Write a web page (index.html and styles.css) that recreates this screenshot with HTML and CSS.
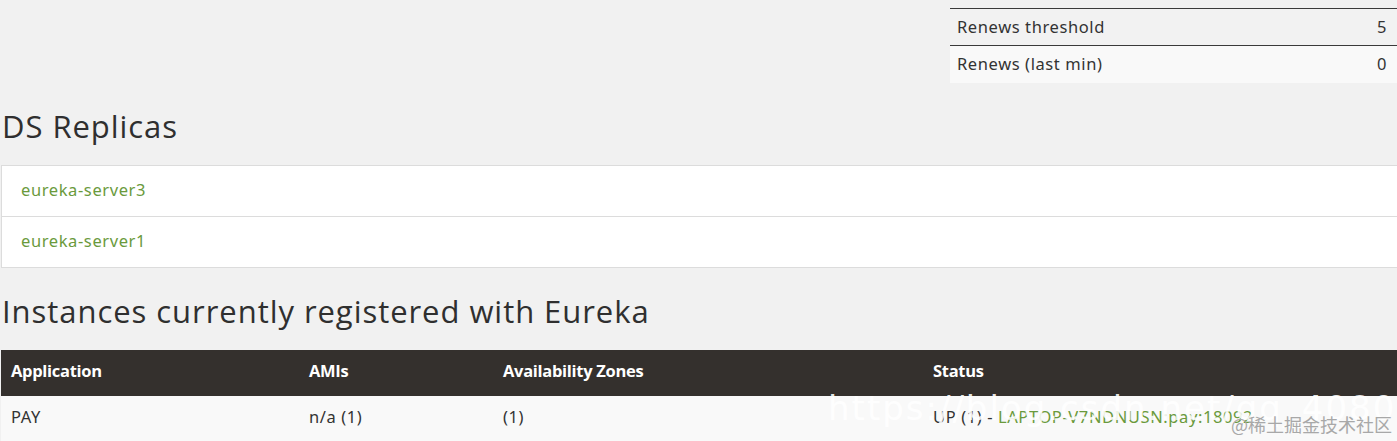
FILE: index.html
```html
<!DOCTYPE html>
<html>
<head>
<meta charset="utf-8">
<link rel="stylesheet" href="styles.css">
</head>
<body>
<div class="page">
  <div class="top-row">
    <table class="stats">
      <tr class="odd"><td>Renews threshold</td><td class="num">5</td></tr>
      <tr class="even"><td>Renews (last min)</td><td class="num">0</td></tr>
    </table>
  </div>
  <h1 class="title">DS Replicas</h1>
  <ul class="replicas">
    <li><a href="#">eureka-server3</a></li>
    <li><a href="#">eureka-server1</a></li>
  </ul>
  <h1 class="title">Instances currently registered with Eureka</h1>
  <table class="instances">
    <thead>
      <tr><th class="c1">Application</th><th class="c2">AMIs</th><th class="c3">Availability Zones</th><th>Status</th></tr>
    </thead>
    <tbody>
      <tr><td>PAY</td><td>n/a (1)</td><td>(1)</td><td>UP (1) - <a href="#">LAPTOP-V7NDNUSN:pay:18092</a></td></tr>
    </tbody>
  </table>
  <div class="wm-url">https://blog.csdn.net/qq_408083</div>
  <div class="wm-cn">@稀土掘金技术社区</div>
</div>
</body>
</html>
```

FILE: styles.css
```css
html, body {
  margin: 0;
  padding: 0;
  background: #f1f1f1;
  overflow: hidden;
}
.page {
  position: relative;
  width: 1397px;
  height: 441px;
  overflow: hidden;
  font-family: "Noto Sans", "Open Sans", sans-serif;
  font-size: 16.5px;
  letter-spacing: 0.6px;
  color: #333;
}
.top-row {
  display: flex;
  justify-content: flex-end;
  padding-top: 8px;
}
.stats {
  width: 447px;
  border-collapse: collapse;
  color: #333;
}
.stats td {
  height: 37px;
  box-sizing: border-box;
  padding: 0 10px 2px 7px;
  border-top: 1px solid #3a3a3a;
}
.stats .odd td { background: #f2f2f2; }
.stats .even td { background: #f9f9f9; }
.stats td.num { text-align: right; }
.title {
  margin: 0;
  padding: 26px 0 0 2px;
  height: 82px;
  box-sizing: border-box;
  font-family: "Open Sans", "Noto Sans", sans-serif;
  font-weight: 500;
  font-size: 31px;
  line-height: 34px;
  color: #2f2f2f;
  letter-spacing: 0.95px;
}
.replicas {
  list-style: none;
  margin: 0 0 0 1px;
  padding: 0;
  background: #fff;
  border: 1px solid #dcdcdc;
  border-right: none;
}
.replicas li {
  height: 50px;
  display: flex;
  align-items: center;
  padding: 0 0 3px 19px;
  box-sizing: border-box;
}
.replicas li + li { border-top: 1px solid #dcdcdc; height: 51px; }
a {
  color: #6a9a3c;
  text-decoration: none;
}
.instances {
  margin-left: 1px;
  width: 1396px;
  border-collapse: collapse;
  table-layout: fixed;
}
.instances th {
  background: #34302d;
  color: #fff;
  font-family: "Open Sans", sans-serif;
  font-weight: 700;
  font-size: 16.5px;
  letter-spacing: -0.3px;
  text-align: left;
  height: 46px;
  padding: 0 10px 5px;
  box-sizing: border-box;
}
.instances th.c1 { width: 298px; }
.instances th.c2 { width: 194px; }
.instances th.c3 { width: 430px; }
.instances td {
  background: #f9f9f9;
  height: 46px;
  box-sizing: border-box;
  padding: 0 10px 5px;
  color: #333;
}
.wm-url {
  position: absolute;
  left: 828px;
  top: 388px;
  font-family: "DejaVu Sans", sans-serif;
  font-size: 34px;
  letter-spacing: 2px;
  color: rgba(255, 255, 255, 0.9);
  white-space: nowrap;
}
.wm-cn {
  position: absolute;
  left: 1231px;
  top: 411px;
  font-family: "Noto Sans CJK SC", sans-serif;
  font-size: 18px;
  letter-spacing: 0;
  color: #a8a8a8;
  white-space: nowrap;
}
```
